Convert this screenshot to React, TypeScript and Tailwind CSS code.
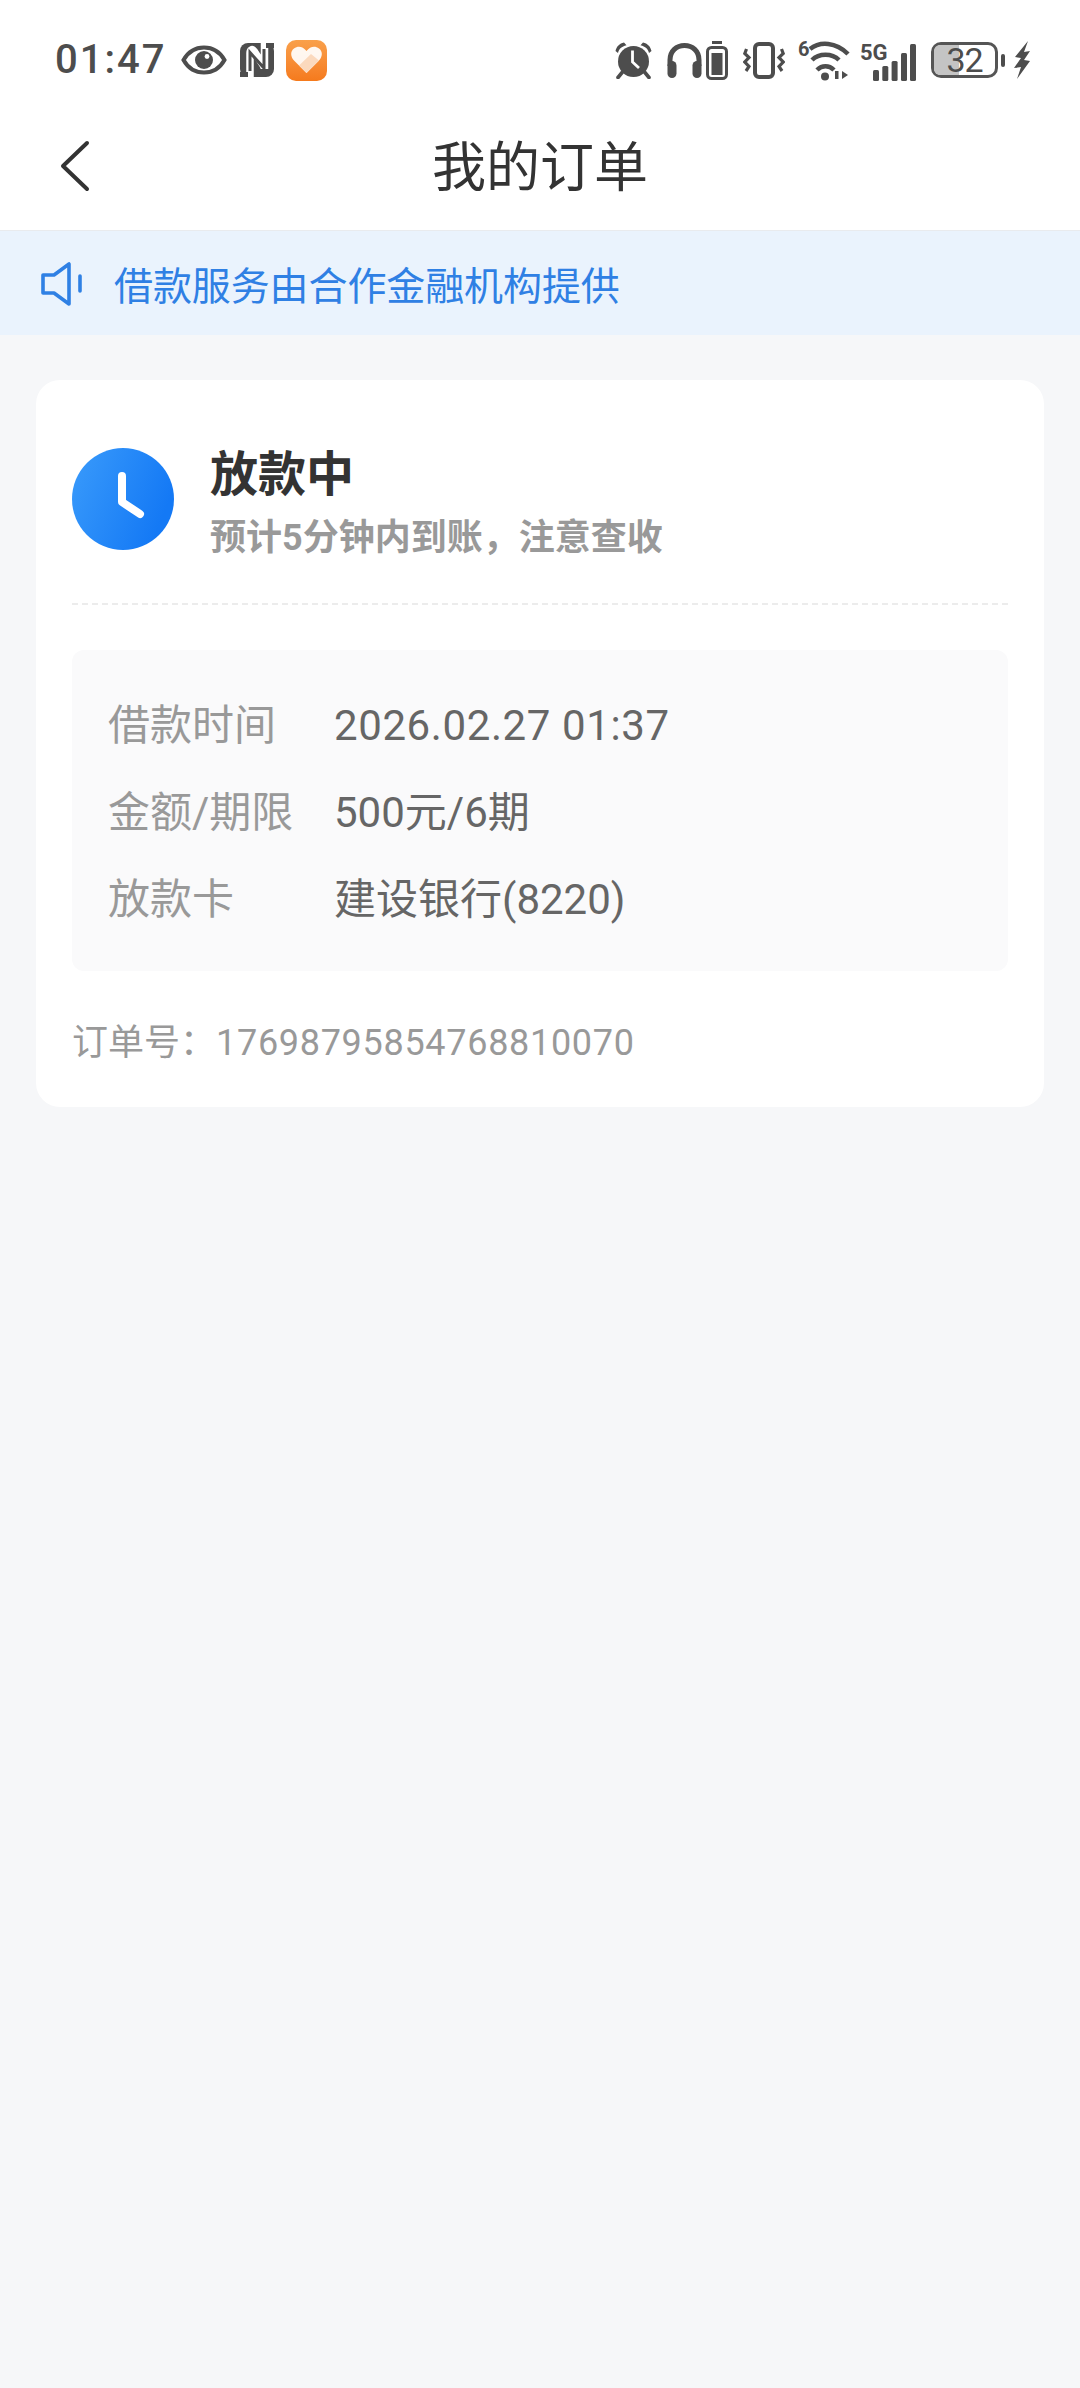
import React from 'react';

const EyeIcon = () => (
  <svg width="46" height="30" viewBox="0 0 46 30" fill="none">
    <path d="M2.500 15C7 7 14 2.500 23 2.500S39 7 43.500 15C39 23 32 27.500 23 27.500S7 23 2.500 15z" stroke="#4d4d4d" strokeWidth="4" />
    <circle cx="23" cy="15" r="9" fill="#4d4d4d" />
    <circle cx="26" cy="11.500" r="2.400" fill="#fff" />
  </svg>
);

const NfcIcon = () => (
  <svg width="34" height="34" viewBox="0 0 34 34" fill="none">
    <rect width="34" height="34" rx="8" fill="#4d4d4d" />
    <path d="M10 34V10C10 7 12 5.500 14 8l9 14c1.500 2.500 1.500 4 1.500 4V0" stroke="#fff" strokeWidth="7.500" />
    <path d="M10 28V9.500L24 25V6" stroke="#4d4d4d" strokeWidth="3" />
    <path d="M0 34h8V29H0zM26 0h8v5h-8z" fill="#4d4d4d" />
  </svg>
);

const HeartApp = () => (
  <div className="w-[41px] h-[41px] rounded-[10px] bg-gradient-to-b from-[#f9a04a] to-[#f57a1c] flex items-center justify-center">
    <svg width="31" height="28" viewBox="0 0 31 28">
      <path d="M15.500 27L3 14.500C-1 10-.5 5 3 2.500 7-.5 12 .5 15.500 5c3.500-4.500 8.500-5.500 12.500-2.500 3.500 2.500 4 7.500 0 12z" fill="#fff" fillOpacity="0.92" />
      <path d="M15.500 27L8 19.500 20 8l8 6.500z" fill="#fbd9bd" />
    </svg>
  </div>
);

const AlarmIcon = () => (
  <svg width="37" height="37" viewBox="0 0 37 37">
    <circle cx="18.500" cy="19.500" r="15.500" fill="#4d4d4d" />
    <path d="M0.500 9C1.500 4.500 4.500 1.500 9 0.500l2.500 2.800C6.500 4.500 4 7 3 11z M36.500 9C35.500 4.500 32.500 1.500 28 0.500l-2.500 2.800c5 1.200 7.500 3.700 8.500 7.700z" fill="#4d4d4d" />
    <path d="M7.500 30l-4.500 5.500M29.500 30l4.500 5.500" stroke="#4d4d4d" strokeWidth="3.600" strokeLinecap="round" />
    <path d="M17.500 8.500v11.500l6.500 6" stroke="#fff" strokeWidth="2.800" fill="none" />
  </svg>
);

const Headphones = () => (
  <svg width="35" height="35" viewBox="0 0 35 35" fill="none">
    <path d="M3 23V17C3 8 9.500 2.500 17.500 2.500S32 8 32 17v6" stroke="#4d4d4d" strokeWidth="5" />
    <rect x="0.500" y="18" width="9" height="17" rx="4.500" fill="#4d4d4d" />
    <rect x="25.500" y="18" width="9" height="17" rx="4.500" fill="#4d4d4d" />
  </svg>
);

const SmallBattery = () => (
  <svg width="22" height="39" viewBox="0 0 22 39" fill="none">
    <rect x="6" y="0" width="10" height="3" fill="#4d4d4d" />
    <rect x="1.500" y="6.500" width="19" height="31" rx="4" stroke="#4d4d4d" strokeWidth="3" />
    <rect x="5.500" y="12" width="11" height="22" fill="#4d4d4d" />
  </svg>
);

const VibrateIcon = () => (
  <svg width="42" height="37" viewBox="0 0 42 37" fill="none">
    <rect x="12" y="2" width="18" height="33" rx="4" stroke="#4d4d4d" strokeWidth="4" />
    <path d="M3.500 7L1.800 11.500 6 15.500 1.800 20 6 24.500 3 29" stroke="#4d4d4d" strokeWidth="3.200" />
    <path d="M38.500 7l1.700 4.500L36 15.500l4.200 4.500L36 24.500l3 4.500" stroke="#4d4d4d" strokeWidth="3.200" />
  </svg>
);

const WifiIcon = () => (
  <svg width="52" height="46" viewBox="0 0 52 46" fill="none">
    <text x="0" y="19" fontSize="20" fontWeight="700" fill="#4d4d4d" fontFamily="Roboto, sans-serif">6</text>
    <path d="M12 12C22 4 38 5 50 17" stroke="#4d4d4d" strokeWidth="4.500" />
    <path d="M14 23C21 16 34 16 41 23" stroke="#4d4d4d" strokeWidth="4.500" />
    <path d="M19 33C24 28 31 28 36 33" stroke="#4d4d4d" strokeWidth="4.500" />
    <circle cx="27" cy="39.500" r="4" fill="#4d4d4d" />
    <path d="M37 34h3.500v8H37zM44 34l6 4-6 4z" fill="#4d4d4d" />
  </svg>
);

const SignalIcon = () => (
  <svg width="57" height="44" viewBox="0 0 57 44">
    <text x="0" y="22" fontSize="22" fontWeight="700" fill="#4d4d4d" fontFamily="Roboto, sans-serif">5G</text>
    <rect x="13" y="32" width="6" height="11" rx="1.500" fill="#4d4d4d" />
    <rect x="22.300" y="28" width="6" height="15" rx="1.500" fill="#4d4d4d" />
    <rect x="31.600" y="23" width="6" height="20" rx="1.500" fill="#4d4d4d" />
    <rect x="41" y="15" width="6" height="28" rx="1.500" fill="#4d4d4d" />
    <rect x="50" y="6" width="6" height="37" rx="1.500" fill="#4d4d4d" />
  </svg>
);

const BatteryIcon = () => (
  <div className="flex items-center gap-[3px]">
    <div className="relative w-[67px] h-[36px] rounded-[10px] border-[3px] border-[#555] flex items-center justify-center">
      <div className="absolute left-0 top-0 bottom-0 w-[25px] rounded-l-[6px] bg-[#c4c4c4]" />
      <span className="relative text-[34px] leading-[30px] tracking-[-1px] text-[#4d4d4d]">32</span>
    </div>
    <div className="w-[4px] h-[13px] rounded-full bg-[#4d4d4d]" />
  </div>
);

const BoltIcon = () => (
  <svg width="16" height="38" viewBox="0 0 16 38">
    <path d="M14 0L1 16l6 1-7 10 7-1-4 12 13-18-6-1 6-9-6 1z" fill="#4d4d4d" />
  </svg>
);

const Row = ({ label, value, tracking }: { label: string; value: string; tracking?: string }) => (
  <div className="flex items-center h-[87px]">
    <span className="w-[226px] text-[#999]">{label}</span>
    <span className={`text-[#666] ${tracking ?? ''}`}>{value}</span>
  </div>
);

export default function App() {
  return (
    <div className="w-[1080px] h-[2388px] bg-[#f6f7f9] flex flex-col font-['Roboto','Noto_Sans_CJK_SC',sans-serif]">
      {/* 状态栏 + 标题 */}
      <div className="bg-white h-[231px] border-b border-[#e9ebee] flex flex-col">
        <div className="h-[120px] flex items-center justify-between pl-[55px] pr-[50px]">
          <div className="flex items-center">
            <span className="w-[126px] text-[40px] font-medium tracking-[2px] text-[#4d4d4d]">01:47</span>
            <div className="flex items-center gap-[12px]">
              <div className="mr-px"><EyeIcon /></div>
              <NfcIcon />
              <HeartApp />
            </div>
          </div>
          <div className="flex items-center">
            <AlarmIcon />
            <div className="w-[15px]" />
            <Headphones />
            <div className="w-[4px]" />
            <SmallBattery />
            <div className="w-[15px]" />
            <VibrateIcon />
            <div className="w-[13px]" />
            <WifiIcon />
            <div className="w-[10px]" />
            <SignalIcon />
            <div className="w-[14px]" />
            <BatteryIcon />
            <div className="w-[9px]" />
            <BoltIcon />
          </div>
        </div>
        <div className="relative h-[110px] flex items-center justify-center">
          <svg className="absolute left-[58px] top-[20px]" width="34" height="52" viewBox="0 0 34 52" fill="none">
            <path d="M29 3L5 26l24 23" stroke="#333" strokeWidth="4" strokeLinecap="round" strokeLinejoin="round" />
          </svg>
          <span className="text-[54px] text-[#333] -mt-[14px]">我的订单</span>
        </div>
      </div>

      {/* 提示条 */}
      <div className="h-[104px] bg-[#eaf3fd] flex items-center pl-[41px]">
        <svg className="mt-[2px]" width="42" height="44" viewBox="0 0 42 44" fill="none">
          <path d="M28 2v40L13 31H2V13h11z" stroke="#2f80e4" strokeWidth="3.600" strokeLinejoin="round" />
          <path d="M39 14v15" stroke="#2f80e4" strokeWidth="3.600" strokeLinecap="round" />
        </svg>
        <span className="ml-[31px] mt-[8px] text-[39px] tracking-[-0.1px] text-[#2f80e4]">借款服务由合作金融机构提供</span>
      </div>

      {/* 订单卡片 */}
      <div className="mt-[45px] mx-[36px] h-[727px] bg-white rounded-[24px] px-[36px] flex flex-col">
        <div className="h-[225px] border-b-2 border-dashed border-[#ececec] flex items-center pt-[14px]">
          <svg width="102" height="102" viewBox="0 0 102 102" fill="none">
            <defs>
              <linearGradient id="clock" x1="0" y1="0" x2="1" y2="0.4">
                <stop offset="0" stopColor="#3a9bfb" />
                <stop offset="1" stopColor="#1479f5" />
              </linearGradient>
            </defs>
            <circle cx="51" cy="51" r="51" fill="url(#clock)" />
            <path d="M50 28V54L68 66" stroke="#fff" strokeWidth="8" strokeLinecap="round" strokeLinejoin="round" />
          </svg>
          <div className="ml-[36px] mt-[8px] flex flex-col">
            <span className="text-[48px] leading-[64px] font-bold text-[#333]">放款中</span>
            <span className="mt-[6px] text-[36px] leading-[50px] font-bold text-[#999]">预计5分钟内到账，注意查收</span>
          </div>
        </div>

        <div className="mt-[45px] h-[321px] bg-[#fafafb] rounded-[12px] px-[36px] pt-[32px] flex flex-col text-[42px]">
          <Row label="借款时间" value="2026.02.27 01:37" tracking="tracking-[0.6px]" />
          <Row label="金额/期限" value="500元/6期" />
          <Row label="放款卡" value="建设银行(8220)" />
        </div>

        <div className="mt-[45px] text-[36px] text-[#999]">
          订单号：<span className="tracking-[0.7px]">17698795854768810070</span>
        </div>
      </div>
    </div>
  );
}
